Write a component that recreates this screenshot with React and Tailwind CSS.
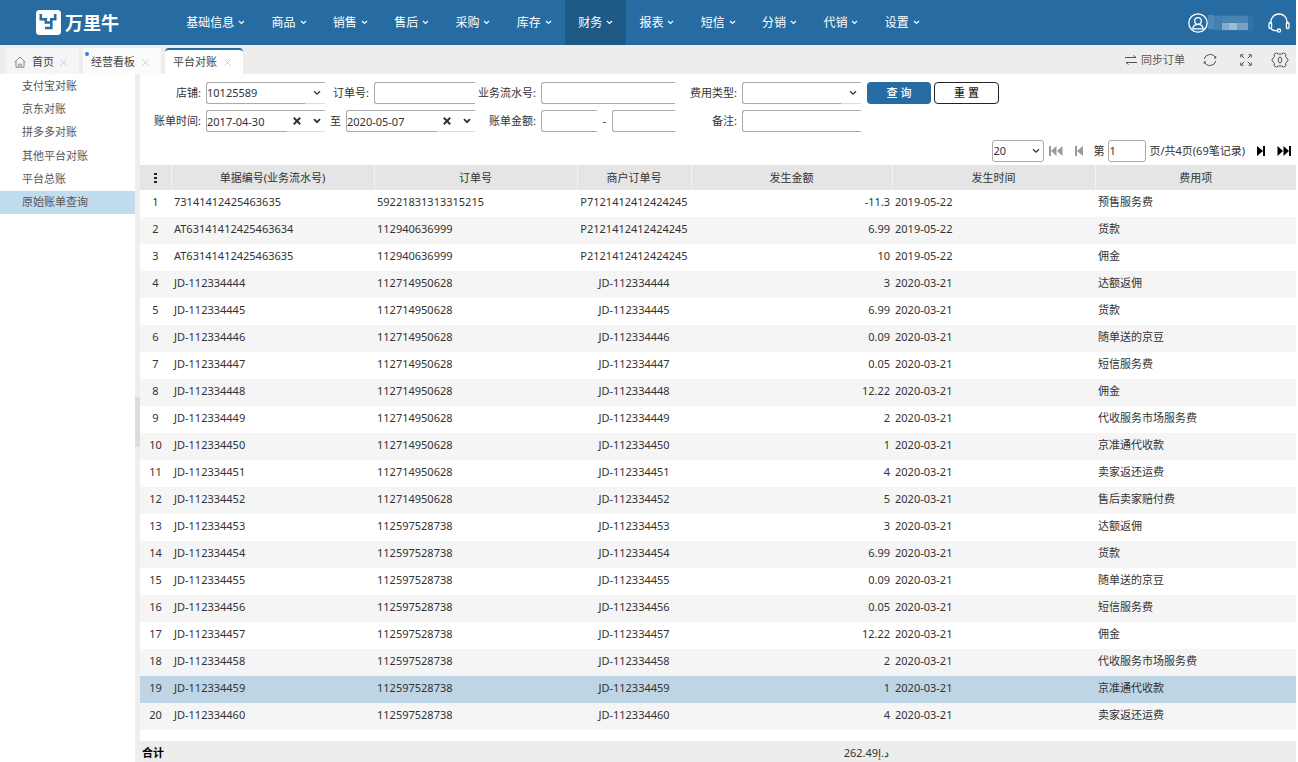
import React, { useState } from "react";

const NAV_ITEMS = [
  "基础信息",
  "商品",
  "销售",
  "售后",
  "采购",
  "库存",
  "财务",
  "报表",
  "短信",
  "分销",
  "代销",
  "设置",
];

const SIDE_ITEMS = [
  "支付宝对账",
  "京东对账",
  "拼多多对账",
  "其他平台对账",
  "平台总账",
  "原始账单查询",
];

const COLUMNS = [
  "单据编号(业务流水号)",
  "订单号",
  "商户订单号",
  "发生金额",
  "发生时间",
  "费用项",
];

const JD_ORDERS = [
  ["112714950628", "3", "达额返佣"],
  ["112714950628", "6.99", "货款"],
  ["112714950628", "0.09", "随单送的京豆"],
  ["112714950628", "0.05", "短信服务费"],
  ["112714950628", "12.22", "佣金"],
  ["112714950628", "2", "代收服务市场服务费"],
  ["112714950628", "1", "京准通代收款"],
  ["112714950628", "4", "卖家返还运费"],
  ["112714950628", "5", "售后卖家赔付费"],
  ["112597528738", "3", "达额返佣"],
  ["112597528738", "6.99", "货款"],
  ["112597528738", "0.09", "随单送的京豆"],
  ["112597528738", "0.05", "短信服务费"],
  ["112597528738", "12.22", "佣金"],
  ["112597528738", "2", "代收服务市场服务费"],
  ["112597528738", "1", "京准通代收款"],
  ["112597528738", "4", "卖家返还运费"],
];

const BILLS = [
  ["73141412425463635", "59221831313315215", "P7121412412424245", "-11.3", "2019-05-22", "预售服务费"],
  ["AT63141412425463634", "112940636999", "P2121412412424245", "6.99", "2019-05-22", "货款"],
  ["AT63141412425463635", "112940636999", "P2121412412424245", "10", "2019-05-22", "佣金"],
  ...JD_ORDERS.map(([order, amount, fee], i) => {
    const billNo = `JD-${112334444 + i}`;
    return [billNo, order, billNo, amount, "2020-03-21", fee];
  }),
];

const Chevron = ({ className, width = 1.3 }) => (
  <svg viewBox="0 0 8 6" className={className} fill="none" stroke="currentColor" strokeWidth={width}>
    <path d="M1 1.2 4 4.2 7 1.2" />
  </svg>
);

const Cross = ({ className }) => (
  <svg viewBox="0 0 8 8" className={className} fill="none" stroke="currentColor">
    <path d="M.5.5l7 7M7.5.5l-7 7" />
  </svg>
);

const Logo = () => (
  <a href="#" className="flex items-center gap-1 text-white">
    <svg viewBox="0 0 25 25" className="h-[25px] w-[25px]">
      <rect width="25" height="25" rx="3.5" fill="#fff" />
      <path
        d="M4.800 4v5.300h5v3.200h5.500M19.200 4v5.300h-3.900v8.700H9"
        fill="none"
        stroke="#266ca3"
        strokeWidth="2.6"
      />
    </svg>
    <span className="text-lg leading-6 font-bold">万里牛</span>
  </a>
);

const Header = () => (
  <header className="flex h-[45px] items-stretch bg-[#266ca3] text-white">
    <div className="flex w-[173px] shrink-0 items-center pl-9">
      <Logo />
    </div>
    <nav className="flex w-[760px] shrink-0">
      {NAV_ITEMS.map((item) => (
        <button
          key={item}
          className={`flex flex-auto items-center justify-center gap-1 text-xs ${
            item === "财务" ? "bg-[#1f5a87]" : "hover:bg-[#1f5a87]"
          }`}
        >
          {item}
          <Chevron className="h-[5px] w-[7px]" />
        </button>
      ))}
    </nav>
    <div className="ml-auto flex items-center pr-1.5">
      <button aria-label="账户" className="flex items-center">
        <svg viewBox="0 0 20 20" className="h-5 w-5" fill="none" stroke="#fff" strokeWidth="1.3">
          <circle cx="10" cy="10" r="9.2" />
          <circle cx="10" cy="8" r="3.3" />
          <path d="M4.8 15.8c.3-3 2.2-4.4 5.2-4.4s4.900 1.400 5.200 4.400z" strokeLinejoin="round" />
        </svg>
        <svg viewBox="0 0 46 16" className="h-4 w-[46px]">
          <rect width="46" height="16" rx="3" fill="#3071a6" />
          <rect width="6" height="14" fill="#5189b5" />
          <rect x="6" y="1" width="8" height="14" fill="#447fb0" />
          <rect x="14" y="1" width="26" height="7" fill="#4a84b3" />
          <rect x="14" y="8" width="7" height="7" fill="#82abcb" />
          <rect x="21" y="8" width="8" height="7" fill="#9cbcd6" />
          <rect x="29" y="8" width="11" height="7" fill="#74a1c5" />
        </svg>
      </button>
      <button aria-label="客服" className="ml-3.5">
        <svg viewBox="0 0 22 20" className="h-5 w-[22px]" fill="none" stroke="#fff" strokeWidth="1.3">
          <path d="M3 11V8.500C3 4.300 6.400 1 11 1s8 3.300 8 7.500V11" />
          <rect x="1" y="9.500" width="2.600" height="6" rx="1.300" />
          <rect x="18.400" y="9.500" width="2.600" height="6" rx="1.300" />
          <path d="M3.200 15.500c.8 1.800 2.300 2.200 6 2.200" />
          <circle cx="11" cy="17.600" r="1.600" />
        </svg>
      </button>
    </div>
  </header>
);

const TabClose = () => (
  <button aria-label="关闭" className="text-[#c4c4c4]">
    <Cross className="h-[7px] w-[7px]" />
  </button>
);

const TabBar = () => (
  <div className="flex h-[29px] items-end bg-[#ededed] pl-1.5 text-[#444]">
    <div className="flex h-[26px] w-[73px] items-center gap-[6px] bg-[#f5f5f5] pt-0.5 pl-2">
      <svg viewBox="0 0 12 12" className="h-3 w-3" fill="none" stroke="#888">
        <path d="M.7 6.200 6 1l5.300 5.200M2 5.200v6h8v-6M4.700 11V8.200h2.600V11" />
      </svg>
      <a href="#">首页</a>
      <TabClose />
    </div>
    <div className="relative ml-1 flex h-[26px] w-[78px] items-center gap-[7px] bg-[#fbfbfb] pt-0.5 pl-2">
      <span className="absolute top-1 left-0.5 h-1 w-1 rounded-full bg-[#1f87d6]" />
      <a href="#">经营看板</a>
      <TabClose />
    </div>
    <div className="ml-1 flex h-[26px] w-[78px] items-center gap-[7px] rounded-t-sm border-t-2 border-[#266ca3] bg-white pl-2">
      <a href="#">平台对账</a>
      <TabClose />
    </div>
    <div className="ml-auto flex h-[29px] items-center pr-[7px] text-[#555]">
      <button className="flex items-center gap-1">
        <svg viewBox="0 0 12 10" className="h-2.5 w-3" fill="none" stroke="currentColor">
          <path d="M0 2.500h11M8.500.5l2.500 2M12 7.500H1M3.500 9.500 1 7.500" />
        </svg>
        同步订单
      </button>
      <button aria-label="刷新" className="ml-[18px]">
        <svg viewBox="0 0 14 14" className="h-3.5 w-3.5" fill="none" stroke="currentColor">
          <path d="M1.200 6A6 6 0 0 1 12.500 5M12.800 8A6 6 0 0 1 1.500 9M12.700 3v2.200h-1.700M1.300 11V8.800H3" />
        </svg>
      </button>
      <button aria-label="全屏" className="ml-[23px]">
        <svg viewBox="0 0 12 12" className="h-3 w-3" fill="none" stroke="currentColor">
          <path d="M.8 3.500V.8h2.700M.8.8l3.500 3.500M8.500.8h2.700v2.700M11.200.8 7.700 4.300M.8 8.500v2.700h2.700M.8 11.200l3.500-3.500M11.200 8.500v2.700H8.500M11.200 11.200 7.700 7.700" />
        </svg>
      </button>
      <button aria-label="设置" className="ml-[19px]">
        <svg viewBox="0 0 18 16" className="h-4 w-[18px]" fill="none" stroke="currentColor">
          <path
            d="M5.500.8 7 2h4l1.500-1.200 2.300 1.400-.2 2.300L17.200 8l-2.600 3.500.2 2.300-2.300 1.400L11 14H7l-1.500 1.200-2.300-1.400.2-2.300L.8 8l2.600-3.500-.2-2.300z"
            strokeLinejoin="round"
          />
          <ellipse cx="9" cy="8" rx="1.700" ry="3" />
        </svg>
      </button>
    </div>
  </div>
);

const Sidebar = () => {
  const [selected, setSelected] = useState("原始账单查询");

  return (
    <aside className="w-[135px] shrink-0 bg-white">
      <ul className="flex h-[140px] flex-col text-[#555]">
        {SIDE_ITEMS.map((item) => (
          <li key={item} className="flex flex-1">
            <button
              onClick={() => setSelected(item)}
              className={`w-full pl-[22px] text-left ${
                selected === item ? "bg-[#c1dcef]" : ""
              }`}
            >
              {item}
            </button>
          </li>
        ))}
      </ul>
    </aside>
  );
};

const Label = ({ htmlFor, className, children }) => (
  <label htmlFor={htmlFor} className={`shrink-0 pr-[5px] text-right ${className}`}>
    {children}
  </label>
);

const fieldClass =
  "h-[22px] min-w-0 rounded-l-[3px] border border-r-0 border-[#aaa] bg-white outline-none";

const SelectField = ({ id, options }) => (
  <div className="relative w-[119px] shrink-0">
    <select id={id} className={`${fieldClass} w-full appearance-none`}>
      {options.map((option) => (
        <option key={option}>{option}</option>
      ))}
    </select>
    <span className="pointer-events-none absolute right-0 bottom-0 flex h-[21px] w-5 items-center justify-start border-b border-[#ddd] bg-white pl-2">
      <Chevron className="h-[6px] w-[8px]" />
    </span>
  </div>
);

const DateField = ({ id, label, value, className }) => {
  const [date, setDate] = useState(value);

  return (
    <div className={`flex shrink-0 ${className}`}>
      <input
        id={id}
        aria-label={label}
        value={date}
        onChange={(e) => setDate(e.target.value)}
        className={`${fieldClass} flex-1`}
      />
      <span className="flex h-[22px] items-center border-t border-b border-t-[#aaa] border-b-[#ddd] pr-1">
        <button type="button" aria-label="清除" onClick={() => setDate("")} className="mr-3 ml-1.5">
          <svg viewBox="0 0 8 8" className="h-2 w-2" fill="none" stroke="currentColor" strokeWidth="2">
            <path d="M.8.8l6.400 6.400M7.200.8.8 7.200" />
          </svg>
        </button>
        <button type="button" aria-label="选择日期">
          <Chevron className="h-[6px] w-[8px]" width={1.9} />
        </button>
      </span>
    </div>
  );
};

const SearchForm = () => (
  <form onSubmit={(e) => e.preventDefault()} className="flex flex-col gap-1.5 pt-2">
    <div className="flex items-center">
      <Label htmlFor="shop" className="w-[66px]">店铺:</Label>
      <SelectField id="shop" options={["10125589"]} />
      <Label htmlFor="order" className="w-[49px]">订单号:</Label>
      <input id="order" className={`${fieldClass} w-[101px]`} />
      <Label htmlFor="serial" className="w-[66px]">业务流水号:</Label>
      <input id="serial" className={`${fieldClass} w-[134px]`} />
      <Label htmlFor="feeType" className="w-[67px]">费用类型:</Label>
      <SelectField id="feeType" options={[""]} />
      <button
        type="submit"
        className="ml-1.5 h-[22px] w-16 shrink-0 rounded-sm bg-[#266ca3] font-medium text-white"
      >
        查 询
      </button>
      <button
        type="reset"
        className="ml-[3px] h-[22px] w-[65px] shrink-0 rounded-sm border border-[#222] bg-white font-medium text-[#222]"
      >
        重 置
      </button>
    </div>
    <div className="flex items-center">
      <Label htmlFor="dateFrom" className="w-[66px]">账单时间:</Label>
      <DateField id="dateFrom" value="2017-04-30" className="w-[119px]" />
      <span className="w-[21px] shrink-0 text-center">至</span>
      <DateField id="dateTo" label="结束时间" value="2020-05-07" className="w-[129px]" />
      <Label htmlFor="amountMin" className="w-[66px]">账单金额:</Label>
      <input id="amountMin" className={`${fieldClass} w-14`} />
      <span className="w-[15px] shrink-0 text-center">-</span>
      <input aria-label="最大金额" className={`${fieldClass} w-[63px]`} />
      <Label htmlFor="remark" className="w-[67px]">备注:</Label>
      <input id="remark" className={`${fieldClass} w-[119px]`} />
    </div>
  </form>
);

const Pagination = () => (
  <div className="mt-[7px] mb-[3px] flex h-[23px] items-center justify-end pr-[5px]">
    <div className="relative">
      <select
        aria-label="每页条数"
        className="block h-[22px] w-[52px] appearance-none rounded-[3px] border border-[#aaa] bg-white"
      >
        <option>20</option>
      </select>
      <Chevron className="pointer-events-none absolute top-2 right-1 h-[6px] w-[8px]" />
    </div>
    <button aria-label="首页" className="ml-[5px] text-[#999]">
      <svg viewBox="0 0 14 10" className="h-2.5 w-3.5" fill="currentColor">
        <path d="M0 0h2v10H0zM7.500 0v10L2 5zM13.500 0v10L8 5z" />
      </svg>
    </button>
    <button aria-label="上一页" className="ml-3 text-[#999]">
      <svg viewBox="0 0 8 10" className="h-2.5 w-2" fill="currentColor">
        <path d="M0 0h2v10H0zM8 0v10L2 5z" />
      </svg>
    </button>
    <label htmlFor="page" className="ml-2.5">第</label>
    <input
      id="page"
      defaultValue="1"
      className="ml-1 h-[22px] w-[38px] rounded-[3px] border border-[#aaa] bg-white outline-none"
    />
    <span className="ml-[3px]">页/共4页(69笔记录)</span>
    <button aria-label="下一页" className="ml-3 text-black">
      <svg viewBox="0 0 8 10" className="h-2.5 w-2" fill="currentColor">
        <path d="M6 0h2v10H6zM0 0v10l6-5z" />
      </svg>
    </button>
    <button aria-label="末页" className="ml-3 text-black">
      <svg viewBox="0 0 14 10" className="h-2.5 w-3.5" fill="currentColor">
        <path d="M12 0h2v10h-2zM.5 0v10L6 5zM6.500 0v10L12 5z" />
      </svg>
    </button>
  </div>
);

const BillTable = () => {
  const [selectedRow, setSelectedRow] = useState(18);

  const rowColor = (i) => {
    if (i === selectedRow) return "bg-[#bdd5e5]";
    return i % 2 ? "bg-[#f5f5f5]" : "bg-white";
  };

  return (
    <table className="w-full table-fixed border-collapse whitespace-nowrap">
      <colgroup>
        <col className="w-[31px]" />
        <col className="w-[203px]" />
        <col className="w-[203px]" />
        <col className="w-[114px]" />
        <col className="w-[201px]" />
        <col className="w-[203px]" />
        <col />
      </colgroup>
      <thead>
        <tr className="h-[25px] bg-[#e5e5e5]">
          <th className="p-0">
            <svg viewBox="0 0 3 10" className="mx-auto h-2.5 w-[3px]" fill="#222">
              <path d="M0 0h3v2H0zM0 4h3v2H0zM0 8h3v2H0z" />
            </svg>
          </th>
          {COLUMNS.map((column) => (
            <th key={column} className="border-l border-[#f3f3f3] p-0 font-normal">
              {column}
            </th>
          ))}
        </tr>
      </thead>
      <tbody>
        {BILLS.map(([billNo, order, merchantOrder, amount, date, fee], i) => (
          <tr key={i} onClick={() => setSelectedRow(i)} className={`h-[27px] ${rowColor(i)}`}>
            <td className="p-0 pb-[3px] text-center">{i + 1}</td>
            <td className="p-0 pb-[3px] pl-[3px]">{billNo}</td>
            <td className="p-0 pb-[3px] pl-[3px]">{order}</td>
            <td className="p-0 pb-[3px] text-center">{merchantOrder}</td>
            <td className="p-0 pr-0.5 pb-[3px] text-right">{amount}</td>
            <td className="p-0 pb-[3px] pl-[3px]">{date}</td>
            <td className="p-0 pb-[3px] pl-[3px]">{fee}</td>
          </tr>
        ))}
      </tbody>
    </table>
  );
};

const App = () => {
  return (
    <div className="flex min-h-screen flex-col bg-white pr-0.5 font-['Noto_Sans','Noto_Sans_CJK_SC',sans-serif] text-[11px] leading-4 text-[#333]">
      <Header />
      <TabBar />
      <div className="flex flex-1">
        <Sidebar />
        <div className="flex w-[5px] shrink-0 flex-col justify-center bg-[#eee] pt-2">
          <div className="h-[50px] bg-[#dcdcdc]" />
        </div>
        <main className="flex min-w-0 flex-1 flex-col">
          <SearchForm />
          <Pagination />
          <BillTable />
          <div className="mt-auto flex h-[21px] items-center bg-[#ededed] pt-0.5">
            <span className="w-[551px] pl-0.5 font-bold text-black">合计</span>
            <span className="w-[198px] text-right">262.49د.إ</span>
          </div>
        </main>
      </div>
    </div>
  );
};

export default App;
